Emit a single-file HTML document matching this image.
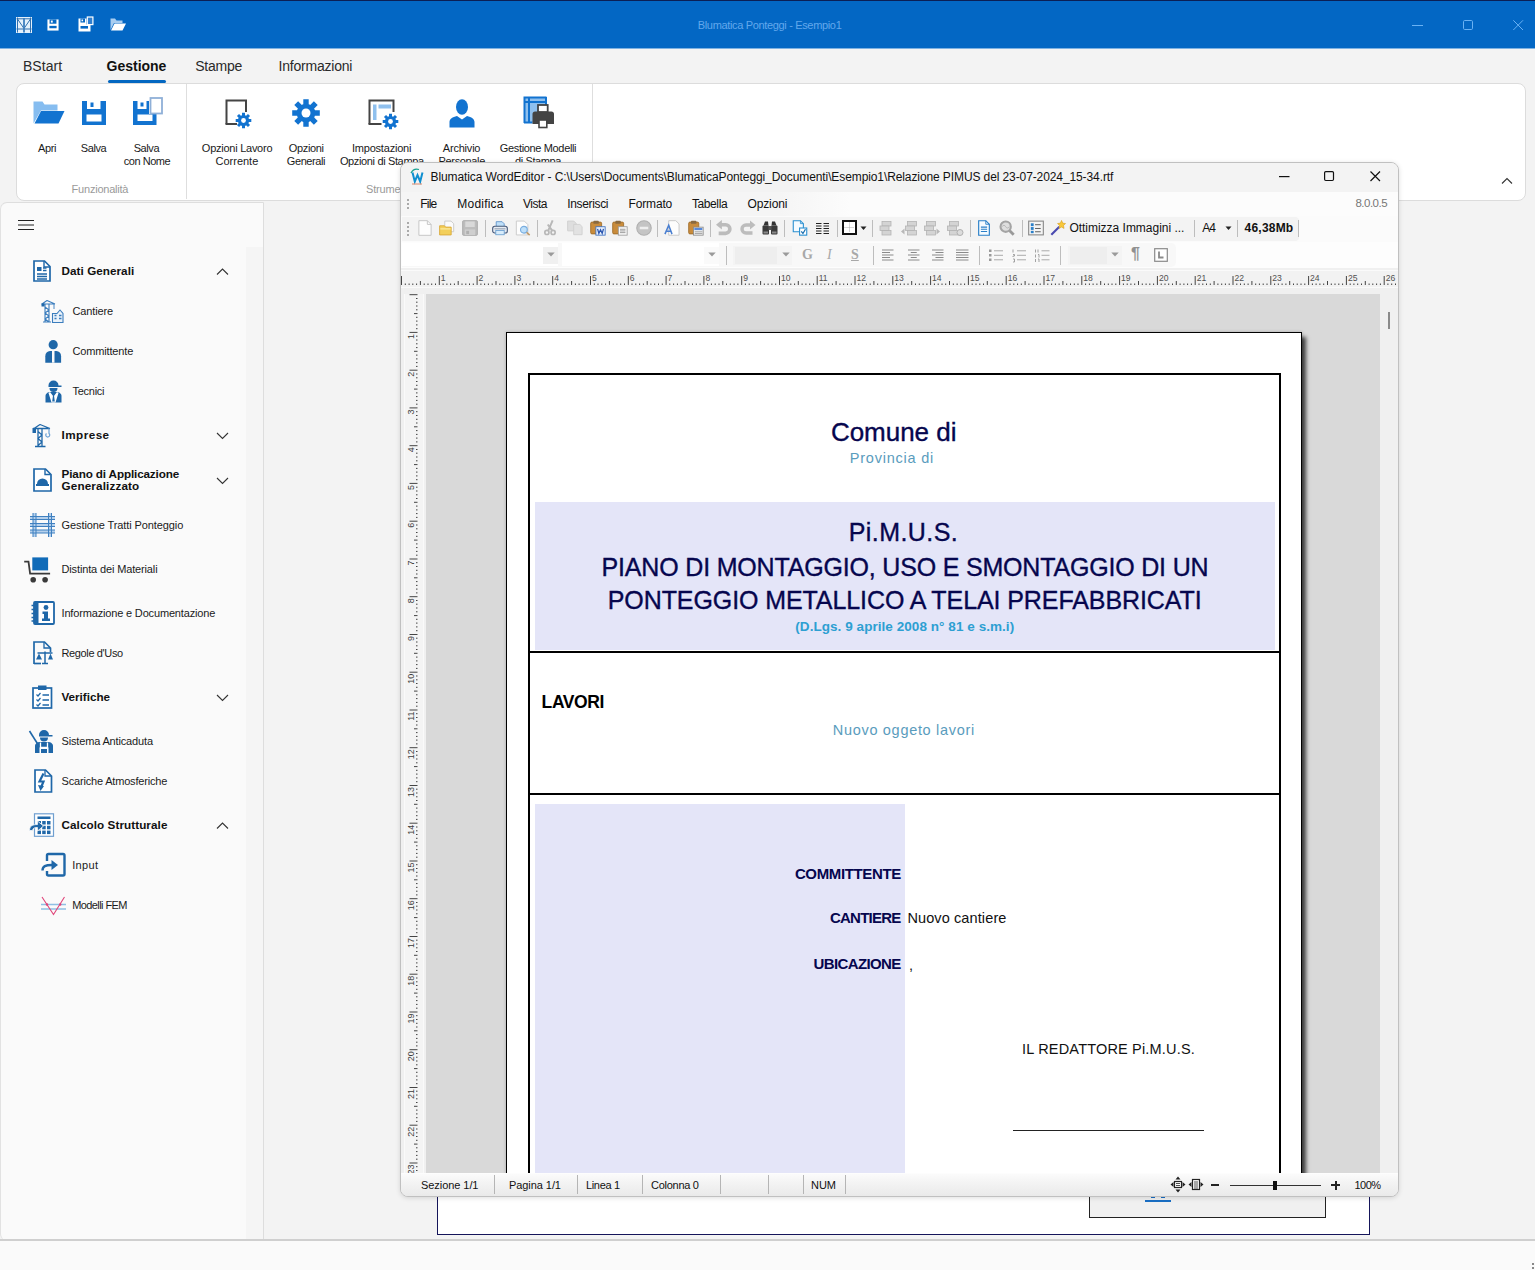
<!DOCTYPE html>
<html lang="it">
<head>
<meta charset="utf-8">
<title>Blumatica Ponteggi - Esempio1</title>
<style>
*{box-sizing:border-box;margin:0;padding:0}
html,body{width:1535px;height:1270px;overflow:hidden;background:#f3f3f3;font-family:"Liberation Sans",sans-serif;font-size:11px;color:#1a1a1a}
.abs{position:absolute}
.tx{position:absolute;white-space:nowrap}
.ic{position:absolute;overflow:visible}
#app{position:absolute;left:0;top:0;width:1535px;height:1270px;overflow:hidden;background:#f3f3f3}
#titlebar{position:absolute;left:0;top:0;width:1535px;height:48px;background:#0367c4;box-shadow:inset 0 1px 0 #0b1f55}
#ribbon{position:absolute;left:16px;top:83px;width:1510px;height:118px;background:#fff;border:1px solid #dcdcdc;border-radius:8px}
#side{position:absolute;left:0px;top:202px;width:264px;height:1038px;background:#fafafa;border-right:1px solid #dddddd;border-top:1px solid #dedede;border-left:1px solid #e2e2e2;border-radius:7px 0 0 6px}
#sidestrip{position:absolute;left:245px;top:44px;width:17px;height:993px;background:#f5f5f5}
#we{position:absolute;left:400px;top:162px;width:998.500px;height:1034.500px;background:#f6f6f6;border:1px solid #c0c0c0;border-radius:8px;overflow:hidden;box-shadow:0 1px 5px rgba(0,0,0,.13)}
#we .sep{position:absolute;width:1px;height:17px;background:#bdbdbd}
#doc{position:absolute;background:#d9d9d9;overflow:hidden}
#page{position:absolute;background:#fff;border:1px solid #000;box-shadow:4px 5px 4px 0 rgba(0,0,0,.7),0 0 3px rgba(0,0,0,.22)}
#d1,#d3,#d4,#d5{-webkit-text-stroke:0.350px currentColor}
.sbs{position:absolute;width:1px;height:19px;background:#b5b5b5}
#apptitle{letter-spacing:-0.338px}
#tab1{letter-spacing:0.059px}
#tab2{letter-spacing:-0.015px}
#tab3{letter-spacing:-0.270px}
#tab4{letter-spacing:-0.215px}
#r1{letter-spacing:-0.354px}
#r2{letter-spacing:-0.433px}
#r3a{letter-spacing:-0.433px}
#r3b{letter-spacing:-0.477px}
#r4a{letter-spacing:-0.254px}
#r4b{letter-spacing:0.000px}
#r5a{letter-spacing:-0.333px}
#r5b{letter-spacing:-0.411px}
#r6a{letter-spacing:-0.197px}
#r6b{letter-spacing:-0.356px}
#r7a{letter-spacing:-0.204px}
#r7b{letter-spacing:-0.356px}
#r8a{letter-spacing:-0.343px}
#r8b{letter-spacing:-0.391px}
#g1{letter-spacing:-0.221px}
#g2{letter-spacing:-0.197px}
#s1{letter-spacing:0.041px}
#s2{letter-spacing:-0.125px}
#s3{letter-spacing:-0.156px}
#s4{letter-spacing:-0.271px}
#s5{letter-spacing:0.445px}
#s6a{letter-spacing:-0.138px}
#s6b{letter-spacing:0.133px}
#s7{letter-spacing:-0.102px}
#s8{letter-spacing:-0.140px}
#s9{letter-spacing:-0.163px}
#s10{letter-spacing:-0.364px}
#s11{letter-spacing:-0.029px}
#s12{letter-spacing:-0.157px}
#s13{letter-spacing:-0.177px}
#s14{letter-spacing:0.074px}
#s15{letter-spacing:0.333px}
#s16{letter-spacing:-0.583px}
#wtitle{letter-spacing:-0.101px}
#m0{letter-spacing:-0.781px}
#m1{letter-spacing:0.216px}
#m2{letter-spacing:-0.492px}
#m3{letter-spacing:-0.352px}
#m4{letter-spacing:-0.148px}
#m5{letter-spacing:-0.389px}
#m6{letter-spacing:-0.098px}
#ver{letter-spacing:-0.495px}
#ott{letter-spacing:-0.017px}
#a4{letter-spacing:-0.987px}
#mb{letter-spacing:0.207px}
#d1{letter-spacing:-0.017px}
#d2{letter-spacing:0.768px}
#d3{letter-spacing:0.440px}
#d4{letter-spacing:-0.181px}
#d5{letter-spacing:-0.087px}
#d6{letter-spacing:0.054px}
#d7{letter-spacing:-0.406px}
#d8{letter-spacing:0.695px}
#d9{letter-spacing:-0.370px}
#d10{letter-spacing:-0.782px}
#d11{letter-spacing:-0.638px}
#d12{letter-spacing:0.113px}
#d14{letter-spacing:0.179px}
#sb1{letter-spacing:-0.061px}
#sb2{letter-spacing:-0.068px}
#sb3{letter-spacing:-0.349px}
#sb4{letter-spacing:-0.270px}
#sb5{letter-spacing:-0.031px}
#sb6{letter-spacing:-0.547px}
</style>
</head>
<body>
<div id="app">

<div id="titlebar">
<svg class="ic" style="left:16px;top:17px" width="16" height="16" viewBox="0 0 16 16"><rect x="0" y="0" width="16" height="16" fill="#e4f1fc"/><path d="M1.500 0.500v15M14.500 0.500v15M0.500 1.800h15M0.500 12h15M1.500 2l6.500 9.500 6.500-9.500" stroke="#2f6fae" stroke-width="1" fill="none"/><path d="M8 1v14.500" stroke="#3d7fbf" stroke-width="1.800"/></svg>
<svg class="ic" style="left:47px;top:19px" width="12" height="12" viewBox="0 0 14 14"><path d="M0.500 0.500h13v13h-13z" fill="#fff"/><rect x="3" y="0.500" width="8" height="5" fill="#0367c4"/><rect x="4.500" y="1.800" width="2.200" height="2.400" fill="#fff"/><rect x="2.800" y="8" width="8.400" height="2.800" fill="#0367c4"/></svg>
<svg class="ic" style="left:78px;top:16px" width="16" height="16" viewBox="0 0 16 16"><path d="M0.500 2.500h8v6h4v7h-12z" fill="#fff"/><rect x="2.500" y="2.500" width="4.500" height="4" fill="#0367c4"/><rect x="3.500" y="3.500" width="1.600" height="1.800" fill="#fff"/><rect x="2.500" y="10" width="7.500" height="2.600" fill="#0367c4"/><rect x="9.300" y="1" width="5.600" height="7.600" fill="#2f7fd0" stroke="#fff" stroke-width="1.200"/></svg>
<svg class="ic" style="left:110px;top:18px" width="16" height="13" viewBox="0 0 16 13"><path d="M0.500 0.500h4.500l1.500 2h6v2.500h-8.500l-3.500 7z" fill="#a9cdf0"/><path d="M4.500 5.500h11.500l-3.500 7h-11.500z" fill="#fff"/></svg>
<div class="tx" id="apptitle" style="left:769.6px;transform:translateX(-50%);top:18.0px;font-size:11px;line-height:14px;color:#62a8ec;">Blumatica Ponteggi - Esempio1</div>
<svg class="ic" style="left:1412px;top:25px" width="12" height="2" viewBox="0 0 12 2"><rect width="11" height="1" fill="#6ab2f4"/></svg>
<svg class="ic" style="left:1463px;top:20px" width="12" height="12" viewBox="0 0 12 12"><rect x="0.500" y="0.500" width="9" height="9" rx="1.200" fill="none" stroke="#6ab2f4" stroke-width="1"/></svg>
<svg class="ic" style="left:1513px;top:20px" width="12" height="12" viewBox="0 0 12 12"><path d="M0.300 0.300L10 10M10 0.300L0.300 10" stroke="#6ab2f4" stroke-width="1" fill="none"/></svg>
</div>
<div class="abs" style="left:0px;top:48px;width:1535px;height:1px;background:#7fb2e2"></div>
<div class="tx" id="tab1" style="left:22.9px;top:57.25px;font-size:14px;line-height:18px;color:#2a2a2a;">BStart</div>
<div class="tx" id="tab2" style="left:106.6px;top:57.25px;font-size:14px;line-height:18px;color:#111;font-weight:bold;">Gestione</div>
<div class="abs" style="left:108px;top:79.8px;width:58px;height:3px;background:#0367c1;border-radius:2px"></div>
<div class="tx" id="tab3" style="left:195.3px;top:57.25px;font-size:14px;line-height:18px;color:#2a2a2a;">Stampe</div>
<div class="tx" id="tab4" style="left:278.5px;top:57.25px;font-size:14px;line-height:18px;color:#2a2a2a;">Informazioni</div>
<div id="ribbon">
<div class="abs" style="left:169px;top:0px;width:1px;height:115px;background:#dedede"></div>
<div class="abs" style="left:575px;top:0px;width:1px;height:115px;background:#dedede"></div>
<svg class="ic" style="left:16px;top:17px" width="32" height="23" viewBox="0 0 32 23"><path d="M0.500 0.500h9l2 3h13v6h-16.500l-7.500 13z" fill="#86bdf0"/><path d="M8 10h23.500l-6 12.500h-24z" fill="#1273d0"/></svg>
<svg class="ic" style="left:65px;top:17px" width="24" height="24" viewBox="0 0 24 24"><path d="M0 0h24v24h-24z" fill="#1273d0"/><rect x="5" y="0" width="13.500" height="8" fill="#fff"/><rect x="8.500" y="1.500" width="3" height="4.500" fill="#1273d0"/><rect x="4.500" y="13.500" width="15" height="7" fill="#fff"/></svg>
<svg class="ic" style="left:116px;top:13px" width="30" height="28" viewBox="0 0 30 28"><path d="M0 4h16v13h7.500v11h-23.500z" fill="#1273d0"/><rect x="4.500" y="4" width="9" height="8" fill="#fff"/><rect x="7.500" y="5.500" width="3" height="4" fill="#1273d0"/><rect x="4.500" y="17.500" width="15" height="6.500" fill="#fff"/><rect x="17.500" y="1" width="11.500" height="15.500" fill="#fff" stroke="#8fb0d8" stroke-width="1.800"/></svg>
<svg class="ic" style="left:208px;top:15px" width="30" height="33" viewBox="0 0 30 33"><path d="M1.500 25v-23.500h19.500v11.500" fill="none" stroke="#444" stroke-width="2"/><path d="M0.500 25h11.500" stroke="#444" stroke-width="2"/><g transform="translate(18.5,21.5)"><circle r="5.600" fill="#1273d0"/><g stroke="#1273d0" stroke-width="3"><path d="M0-7.800V7.800M-7.800 0H7.800M-5.500-5.500L5.500 5.500M-5.500 5.500L5.500-5.500"/></g><circle r="2.400" fill="#fff"/></g></svg>
<svg class="ic" style="left:274px;top:14px" width="30" height="30" viewBox="-15 -15 30 30"><circle r="9.300" fill="#1273d0"/><g stroke="#1273d0" stroke-width="5.400"><path d="M0-13.800V13.800M-13.800 0H13.800M-9.800-9.800L9.800 9.800M-9.800 9.800L9.800-9.800"/></g><circle r="4.500" fill="#fff"/></svg>
<svg class="ic" style="left:350.5px;top:14.5px" width="32" height="33" viewBox="0 0 32 33"><path d="M1.500 25v-23.500h24v11.500" fill="none" stroke="#444" stroke-width="2"/><path d="M0.500 25h13" stroke="#444" stroke-width="2"/><rect x="5" y="5.500" width="3.500" height="15.500" fill="#8fc0ee"/><rect x="10.500" y="5.500" width="12.500" height="4" fill="#8fc0ee"/><g transform="translate(22.5,22.5)"><circle r="5.600" fill="#1273d0"/><g stroke="#1273d0" stroke-width="3"><path d="M0-7.800V7.800M-7.800 0H7.800M-5.500-5.500L5.500 5.500M-5.500 5.500L5.500-5.500"/></g><circle r="2.400" fill="#fff"/></g></svg>
<svg class="ic" style="left:432px;top:14.5px" width="26" height="29" viewBox="0 0 26 29"><ellipse cx="13" cy="8" rx="6" ry="7.800" fill="#1273d0"/><path d="M0.500 28.500v-5.500c0-3 3-5 7.500-6l5 3.500 5-3.500c4.500 1 7.500 3 7.500 6v5.500z" fill="#1273d0"/></svg>
<svg class="ic" style="left:506px;top:12px" width="32" height="34" viewBox="0 0 32 34"><rect x="1.500" y="1.500" width="21" height="25" fill="#8fc0ee"/><path d="M0.500 1.500h23M1.500 0.500v26.500M6 1v26M1 6h22.500M1 26.500h8.500M23 1v8" stroke="#1273d0" stroke-width="2" fill="none"/><path d="M9.500 18c0-1.500 1-2.500 2.500-2.500h16.500c1.500 0 2.500 1 2.500 2.500v10h-21.500z" fill="#444"/><rect x="15" y="9" width="9.700" height="7" fill="#fff" stroke="#444" stroke-width="1.800"/><rect x="16" y="24" width="7.800" height="7.500" fill="#fff" stroke="#444" stroke-width="1.600"/></svg>
<div class="tx" id="r1" style="left:30.05px;transform:translateX(-50%);top:57.2px;font-size:11px;line-height:14px;color:#1a1a1a;">Apri</div>
<div class="tx" id="r2" style="left:76.5px;transform:translateX(-50%);top:57.2px;font-size:11px;line-height:14px;color:#1a1a1a;">Salva</div>
<div class="tx" id="r3a" style="left:129.4px;transform:translateX(-50%);top:57.2px;font-size:11px;line-height:14px;color:#1a1a1a;">Salva</div>
<div class="tx" id="r3b" style="left:130.0px;transform:translateX(-50%);top:70.2px;font-size:11px;line-height:14px;color:#1a1a1a;">con Nome</div>
<div class="tx" id="r4a" style="left:220.05px;transform:translateX(-50%);top:57.2px;font-size:11px;line-height:14px;color:#1a1a1a;">Opzioni Lavoro</div>
<div class="tx" id="r4b" style="left:219.9px;transform:translateX(-50%);top:70.2px;font-size:11px;line-height:14px;color:#1a1a1a;">Corrente</div>
<div class="tx" id="r5a" style="left:289.25px;transform:translateX(-50%);top:57.2px;font-size:11px;line-height:14px;color:#1a1a1a;">Opzioni</div>
<div class="tx" id="r5b" style="left:288.95px;transform:translateX(-50%);top:70.2px;font-size:11px;line-height:14px;color:#1a1a1a;">Generali</div>
<div class="tx" id="r6a" style="left:364.6px;transform:translateX(-50%);top:57.2px;font-size:11px;line-height:14px;color:#1a1a1a;">Impostazioni</div>
<div class="tx" id="r6b" style="left:364.8px;transform:translateX(-50%);top:70.2px;font-size:11px;line-height:14px;color:#1a1a1a;">Opzioni di Stampa</div>
<div class="tx" id="r7a" style="left:444.55px;transform:translateX(-50%);top:57.2px;font-size:11px;line-height:14px;color:#1a1a1a;">Archivio</div>
<div class="tx" id="r7b" style="left:444.75px;transform:translateX(-50%);top:70.2px;font-size:11px;line-height:14px;color:#1a1a1a;">Personale</div>
<div class="tx" id="r8a" style="left:521.0px;transform:translateX(-50%);top:57.2px;font-size:11px;line-height:14px;color:#1a1a1a;">Gestione Modelli</div>
<div class="tx" id="r8b" style="left:521.0px;transform:translateX(-50%);top:70.2px;font-size:11px;line-height:14px;color:#1a1a1a;">di Stampa</div>
<div class="tx" id="g1" style="left:82.95px;transform:translateX(-50%);top:98.3px;font-size:11px;line-height:14px;color:#9a9a9a;">Funzionalità</div>
<div class="tx" id="g2" style="left:371.75px;transform:translateX(-50%);top:98.3px;font-size:11px;line-height:14px;color:#9a9a9a;">Strumenti</div>
<svg class="ic" style="left:1484px;top:93px" width="12" height="8" viewBox="0 0 12 8"><path d="M1 6.500L6 1.500L11 6.500" fill="none" stroke="#333" stroke-width="1.100"/></svg>
</div>
<div id="side">
<div id="sidestrip"></div>
<svg class="ic" style="left:17px;top:16px" width="17" height="12" viewBox="0 0 17 12"><path d="M0 1.500h16M0 6h16M0 10.500h16" stroke="#222" stroke-width="1"/></svg>
<svg class="ic" style="left:31.5px;top:57px" width="18" height="22" viewBox="0 0 18 22"><path d="M1 1h10.500l5.500 5.500v14.500h-16z" fill="#fff" stroke="#1f67a8" stroke-width="1.700"/><path d="M11 1v6h6" fill="none" stroke="#1f67a8" stroke-width="1.400"/><rect x="4" y="7" width="4.500" height="4" fill="#1f67a8"/><path d="M10 8h3.500M10 10.500h3.500M4 14h10M4 16.500h10M4 19h10" stroke="#1f67a8" stroke-width="1.300"/></svg>
<div class="tx" id="s1" style="left:60.6px;top:59.71px;font-size:11.7px;line-height:15px;color:#111;font-weight:bold;">Dati Generali</div>
<svg class="ic" style="left:215px;top:64.5px" width="13" height="8" viewBox="0 0 13 8"><path d="M1 6.500L6.500 1L12 6.500" fill="none" stroke="#333" stroke-width="1.100"/></svg>
<svg class="ic" style="left:40px;top:97px" width="23" height="23" viewBox="0 0 23 23"><path d="M0.500 4h13M6 0.500l-5 3.500M6 0.500l8 3.500M4 4v18M8 4v18M4 7l4 3-4 3 4 3-4 3 4 3M2 22h8" stroke="#3b7dbd" stroke-width="1.100" fill="none"/><rect x="0.500" y="3.500" width="3" height="3" fill="#1f67a8"/><path d="M13 4v5" stroke="#3b7dbd" stroke-width="0.900"/><path d="M11.500 22.500v-9h4.500l3-3.500 3 3.500v9z" fill="#eaf2fa" stroke="#3b7dbd" stroke-width="1.100"/><path d="M13.500 15.500h2M13.500 18.500h2M18 15.500h2.500M18 18.500h2.500" stroke="#3b7dbd" stroke-width="1.400"/></svg>
<div class="tx" id="s2" style="left:71.5px;top:101.4px;font-size:11px;line-height:14px;color:#1a1a1a;">Cantiere</div>
<svg class="ic" style="left:43.5px;top:137px" width="17" height="23" viewBox="0 0 17 23"><circle cx="8.200" cy="4.700" r="4.600" fill="#1f67a8"/><path d="M0.300 22.700v-6.500c0-3.200 2-5 4.700-5.200h6.400c2.700 0.200 4.700 2 4.700 5.200v6.500z" fill="#1f67a8"/><rect x="7" y="11" width="2.500" height="11.700" fill="#fafafa"/></svg>
<div class="tx" id="s3" style="left:71.5px;top:141.4px;font-size:11px;line-height:14px;color:#1a1a1a;">Committente</div>
<svg class="ic" style="left:43.5px;top:175.8px" width="17" height="24" viewBox="0 0 17 24"><path d="M3.500 6.500a5 5 0 0 1 10 0h3v1.600h-13z" fill="#1f67a8"/><path d="M4.500 9h8a4 4 0 0 1-8 0z" fill="#1f67a8"/><path d="M0.500 23.500v-6.500c0-2.500 2.500-4 5-4h6c2.500 0 5 1.500 5 4v6.500z" fill="#1f67a8"/><path d="M5 13l3.500 4.500 3.500-4.500 1.500 1-3 9.500h-4l-3-9.500z" fill="#fff"/><path d="M7.500 15h2l-0.500 1.500 0.800 6h-2.600l0.800-6z" fill="#1f67a8"/></svg>
<div class="tx" id="s4" style="left:71.5px;top:181.2px;font-size:11px;line-height:14px;color:#1a1a1a;">Tecnici</div>
<svg class="ic" style="left:31px;top:221px" width="20" height="23" viewBox="0 0 20 23"><path d="M1 4.500h17M8 0.500l-6 4M8 0.500l10 4M6 4.500v18M10 4.500v18M6 7.500l4 3.500-4 3.500 4 3.500-4 3.500M3 22.500h10.500" stroke="#1f67a8" stroke-width="1.300" fill="none"/><rect x="0.500" y="4" width="3.500" height="5" fill="#1f67a8"/><path d="M17 4.500v5a2 2 0 1 1-2.500 0" stroke="#6ea3d6" stroke-width="1.200" fill="none"/></svg>
<div class="tx" id="s5" style="left:60.6px;top:223.61px;font-size:11.7px;line-height:15px;color:#111;font-weight:bold;">Imprese</div>
<svg class="ic" style="left:215px;top:229.0px" width="13" height="8" viewBox="0 0 13 8"><path d="M1 1L6.500 6.500L12 1" fill="none" stroke="#333" stroke-width="1.100"/></svg>
<svg class="ic" style="left:31.5px;top:265px" width="19" height="24" viewBox="0 0 19 24"><path d="M1 1h11.500l5.500 5.500v16.500h-17z" fill="#fff" stroke="#1f67a8" stroke-width="1.700"/><path d="M12 1v5.500h5.500" fill="none" stroke="#1f67a8" stroke-width="1.400"/><path d="M4 16a5.500 5.500 0 0 1 11 0h1v2h-13v-2z" fill="#1f67a8"/></svg>
<div class="tx" id="s6a" style="left:60.6px;top:262.51px;font-size:11.7px;line-height:15px;color:#111;font-weight:bold;">Piano di Applicazione</div>
<div class="tx" id="s6b" style="left:60.6px;top:275.41px;font-size:11.7px;line-height:15px;color:#111;font-weight:bold;">Generalizzato</div>
<svg class="ic" style="left:215px;top:274.0px" width="13" height="8" viewBox="0 0 13 8"><path d="M1 1L6.500 6.500L12 1" fill="none" stroke="#333" stroke-width="1.100"/></svg>
<svg class="ic" style="left:29px;top:310px" width="25" height="24" viewBox="0 0 25 24"><g fill="#b5d0ec"><rect x="0" y="3.500" width="25" height="3"/><rect x="0" y="10.500" width="25" height="3"/><rect x="0" y="17" width="25" height="3"/><rect x="3" y="0" width="3" height="24"/><rect x="18.500" y="0" width="3" height="24"/></g><g stroke="#3f80c0" stroke-width="1"><path d="M0 3.500h25M0 6.500h25M0 10.500h25M0 13.500h25M0 17h25M0 20h25M3 0v24M6 0v24M18.500 0v24M21.500 0v24"/></g></svg>
<div class="tx" id="s7" style="left:60.6px;top:315.4px;font-size:11px;line-height:14px;color:#1a1a1a;">Gestione Tratti Ponteggio</div>
<svg class="ic" style="left:23px;top:354px" width="27" height="27" viewBox="0 0 27 27"><rect x="8.300" y="0.400" width="15.800" height="13" fill="#106bb8"/><path d="M0.200 4.600h4.300l1.600 12h20" fill="none" stroke="#3a3a3a" stroke-width="1.800"/><circle cx="9.200" cy="22.800" r="2.800" fill="#3a3a3a"/><circle cx="21.100" cy="22.800" r="2.800" fill="#3a3a3a"/></svg>
<div class="tx" id="s8" style="left:60.5px;top:359.4px;font-size:11px;line-height:14px;color:#1a1a1a;">Distinta dei Materiali</div>
<svg class="ic" style="left:29.5px;top:397.5px" width="24" height="24" viewBox="0 0 24 24"><rect x="3" y="1" width="20" height="22" rx="1" fill="#fff" stroke="#1f67a8" stroke-width="1.800"/><path d="M0.500 4.500h5M0.500 8.500h5M0.500 12.500h5M0.500 16.500h5M0.500 20h5" stroke="#1f67a8" stroke-width="1.600"/><rect x="3" y="1" width="4.500" height="22" fill="#1f67a8"/><circle cx="15" cy="6.500" r="2.400" fill="#1f67a8"/><path d="M11.500 10.500h5.500v7h2v2.500h-8v-2.500h2v-4.500h-1.500z" fill="#1f67a8"/></svg>
<div class="tx" id="s9" style="left:60.5px;top:403.3px;font-size:11px;line-height:14px;color:#1a1a1a;">Informazione e Documentazione</div>
<svg class="ic" style="left:32px;top:438px" width="20" height="24" viewBox="0 0 20 24"><path d="M1 23v-22h10.500l6 6v4" fill="none" stroke="#1f67a8" stroke-width="1.700"/><path d="M11 1v6h6" fill="none" stroke="#1f67a8" stroke-width="1.300"/><path d="M1 22.500h7" stroke="#1f67a8" stroke-width="1.700"/><path d="M4.500 12h15M12 10.500v12M9 22.500h6" stroke="#1f67a8" stroke-width="1.500" fill="none"/><path d="M3 18.500l3-6 3 6zM15 18.500l2.500-6 2.500 6z" fill="#1f67a8"/></svg>
<div class="tx" id="s10" style="left:60.5px;top:443.2px;font-size:11px;line-height:14px;color:#1a1a1a;">Regole d'Uso</div>
<svg class="ic" style="left:31px;top:482px" width="21" height="24" viewBox="0 0 21 24"><rect x="1" y="3" width="18.500" height="20" fill="#fff" stroke="#1f67a8" stroke-width="1.700"/><rect x="6" y="0.500" width="8.500" height="4.500" fill="#1f67a8"/><path d="M4.500 9.500l1.500 1.500 2.500-3M4.500 14.500l1.500 1.500 2.500-3M4.500 19.500l1.500 1.500 2.500-3" fill="none" stroke="#1f67a8" stroke-width="1.200"/><path d="M10.500 10h6.500M10.500 15h6.500M10.500 20h6.500" stroke="#1f67a8" stroke-width="1.400"/></svg>
<div class="tx" id="s11" style="left:60.5px;top:485.71px;font-size:11.7px;line-height:15px;color:#111;font-weight:bold;">Verifiche</div>
<svg class="ic" style="left:215px;top:490.5px" width="13" height="8" viewBox="0 0 13 8"><path d="M1 1L6.500 6.500L12 1" fill="none" stroke="#333" stroke-width="1.100"/></svg>
<svg class="ic" style="left:27.8px;top:526.5px" width="25" height="23" viewBox="0 0 25 23"><path d="M0.500 1l8.500 13.500" stroke="#1f67a8" stroke-width="1.600"/><path d="M10 5a5 5 0 0 1 10 0h3.500v1.600h-13.500z" fill="#1f67a8"/><path d="M11 7.500h8a4 4 0 0 1-8 0z" fill="#1f67a8"/><path d="M6 23v-7c0-2.500 2.500-4 5-4h8c2.500 0 5 1.500 5 4v7z" fill="#1f67a8"/><path d="M11.500 12.500v5h7v-5" fill="none" stroke="#fff" stroke-width="1.300"/><rect x="10.500" y="17.500" width="9" height="5.500" fill="#fff"/><rect x="12" y="19" width="6" height="4" fill="#1f67a8"/></svg>
<div class="tx" id="s12" style="left:60.5px;top:531.4px;font-size:11px;line-height:14px;color:#1a1a1a;">Sistema Anticaduta</div>
<svg class="ic" style="left:32.5px;top:565.5px" width="19" height="24" viewBox="0 0 19 24"><path d="M1 1h10.500l6 6v16h-16.500z" fill="#fff" stroke="#1f67a8" stroke-width="1.700"/><path d="M11 1v6h6" fill="none" stroke="#1f67a8" stroke-width="1.300"/><path d="M9.500 4.500l-4 8h4l-2.500 6" fill="none" stroke="#1f67a8" stroke-width="2.200"/><path d="M4 16l2.500 6 3.500-5z" fill="#1f67a8"/></svg>
<div class="tx" id="s13" style="left:60.5px;top:571.3px;font-size:11px;line-height:14px;color:#1a1a1a;">Scariche Atmosferiche</div>
<svg class="ic" style="left:27.5px;top:609.5px" width="25" height="24" viewBox="0 0 25 24"><rect x="5.500" y="0.800" width="19" height="22.500" fill="#fff" stroke="#6f9fd0" stroke-width="1.200"/><rect x="8.500" y="3.500" width="13" height="2.500" fill="#1f67a8"/><g fill="#1f67a8"><rect x="8.500" y="8" width="3.500" height="3.500"/><rect x="13.200" y="8" width="3.500" height="3.500"/><rect x="18" y="8" width="3.500" height="3.500"/><rect x="8.500" y="12.800" width="3.500" height="3.500"/><rect x="13.200" y="12.800" width="3.500" height="3.500"/><rect x="18" y="12.800" width="3.500" height="3.500"/><rect x="8.500" y="17.600" width="3.500" height="3.500"/><rect x="13.200" y="17.600" width="3.500" height="3.500"/><rect x="18" y="17.600" width="3.500" height="3.500"/></g><path d="M0.500 17.500c0-4.500 3-6 8-6v-3.500l6 5-6 5v-3.500c-3 0-4.500 0.500-5 3z" fill="#1f67a8" stroke="#fafafa" stroke-width="0.800"/></svg>
<div class="tx" id="s14" style="left:60.5px;top:613.71px;font-size:11.7px;line-height:15px;color:#111;font-weight:bold;">Calcolo Strutturale</div>
<svg class="ic" style="left:215px;top:618.5px" width="13" height="8" viewBox="0 0 13 8"><path d="M1 6.500L6.500 1L12 6.500" fill="none" stroke="#333" stroke-width="1.100"/></svg>
<svg class="ic" style="left:40px;top:650px" width="25" height="24" viewBox="0 0 25 24"><path d="M6 8v-5.500a1.500 1.500 0 0 1 1.500-1.500h14.500a1.500 1.500 0 0 1 1.500 1.500v18.500a1.500 1.500 0 0 1-1.500 1.500h-14.500a1.500 1.500 0 0 1-1.500-1.500v-3" fill="none" stroke="#1f67a8" stroke-width="2.400"/><path d="M1.500 17.500c0-4.500 3-5.500 9.500-5.500" fill="none" stroke="#1f67a8" stroke-width="2.400"/><path d="M10.500 7l6.500 5-6.500 5z" fill="#1f67a8"/></svg>
<div class="tx" id="s15" style="left:71.2px;top:655.2px;font-size:11px;line-height:14px;color:#1a1a1a;">Input</div>
<svg class="ic" style="left:40px;top:693px" width="25" height="21" viewBox="0 0 25 21"><path d="M0 8.500h25M0 13h25" stroke="#8fc0e4" stroke-width="1.400"/><path d="M1 1l11.500 17.500 11-17.500" fill="none" stroke="#e0457a" stroke-width="1.100"/><circle cx="6" cy="8.500" r="1.200" fill="#e0457a"/><circle cx="19.200" cy="8.500" r="1.200" fill="#e0457a"/></svg>
<div class="tx" id="s16" style="left:71.2px;top:694.8px;font-size:11px;line-height:14px;color:#1a1a1a;">Modelli FEM</div>
</div>
<div class="abs" style="left:0px;top:1239px;width:1535px;height:31px;background:#fafafa;border-top:2px solid #cfcfcf"></div>
<div class="abs" style="left:1532px;top:1263px;width:2px;height:2px;background:#888"></div>
<div class="abs" style="left:1532px;top:1267px;width:2px;height:2px;background:#888"></div>
<div class="abs" style="left:437px;top:1000px;width:933px;height:235px;background:#fff;border:1px solid #15155a"></div>
<div class="abs" style="left:1089px;top:1100px;width:237px;height:118px;background:#f0f0f0;border:1px solid #222"></div>
<div class="abs" style="left:1145px;top:1199.5px;width:26px;height:2px;background:#1a6fc4"></div>
<div class="abs" style="left:1151px;top:1196px;width:4px;height:2px;background:#1a6fc4"></div>
<div class="abs" style="left:1161px;top:1196px;width:4px;height:2px;background:#1a6fc4"></div>
<div id="we">
<div class="abs" style="left:0px;top:0px;width:999px;height:29px;background:#f3f3f3"></div>
<svg class="ic" style="left:8.5px;top:4.5px" width="15" height="17" viewBox="0 0 15 17"><path d="M2.500 4.500l2.300 9 2.700-6.500 2.700 6.500 2.300-9" fill="none" stroke="#0f8fd0" stroke-width="2"/><path d="M1 5c1.500-3 4.500-4.500 8-3.500" fill="none" stroke="#17a090" stroke-width="1.300"/><path d="M2 16h10" stroke="#d9876a" stroke-width="1"/></svg>
<div class="tx" id="wtitle" style="left:29.5px;top:7.42px;font-size:12px;line-height:15px;color:#111;">Blumatica WordEditor - C:\Users\Documents\BlumaticaPonteggi_Documenti\Esempio1\Relazione PIMUS del 23-07-2024_15-34.rtf</div>
<svg class="ic" style="left:878px;top:12.5px" width="12" height="2" viewBox="0 0 12 2"><rect width="10.500" height="1.200" fill="#111"/></svg>
<svg class="ic" style="left:923px;top:8px" width="12" height="12" viewBox="0 0 12 12"><rect x="0.600" y="0.600" width="8.900" height="8.900" rx="1.200" fill="none" stroke="#111" stroke-width="1.200"/></svg>
<svg class="ic" style="left:968.5px;top:8px" width="12" height="12" viewBox="0 0 12 12"><path d="M0.500 0.500L10 10M10 0.500L0.500 10" stroke="#111" stroke-width="1.200" fill="none"/></svg>
<div class="abs" style="left:0px;top:29px;width:999px;height:24px;background:linear-gradient(90deg,#f5f5f5,#f5f5f5 38%,#fcfcfc 45%)"></div>
<div class="abs" style="left:6px;top:36px;width:2px;height:2px;background:#aaa;box-shadow:0 4px #aaa,0 8px #aaa"></div>
<div class="tx" id="m0" style="left:19.3px;top:33.82px;font-size:12px;line-height:15px;color:#111;">File</div>
<div class="tx" id="m1" style="left:56.3px;top:33.82px;font-size:12px;line-height:15px;color:#111;">Modifica</div>
<div class="tx" id="m2" style="left:122px;top:33.82px;font-size:12px;line-height:15px;color:#111;">Vista</div>
<div class="tx" id="m3" style="left:166.3px;top:33.82px;font-size:12px;line-height:15px;color:#111;">Inserisci</div>
<div class="tx" id="m4" style="left:227.5px;top:33.82px;font-size:12px;line-height:15px;color:#111;">Formato</div>
<div class="tx" id="m5" style="left:290.9px;top:33.82px;font-size:12px;line-height:15px;color:#111;">Tabella</div>
<div class="tx" id="m6" style="left:346.4px;top:33.82px;font-size:12px;line-height:15px;color:#111;">Opzioni</div>
<div class="tx" id="ver" style="left:954.4px;top:33.01px;font-size:11.5px;line-height:14px;color:#777;">8.0.0.5</div>
<div class="abs" style="left:0px;top:53px;width:999px;height:26px;background:#fbfbfb"></div>
<div class="abs" style="left:1px;top:54px;width:897px;height:24px;background:#f3f3f3;border-radius:0 4px 4px 0"></div>
<div class="abs" style="left:6px;top:59px;width:2px;height:2px;background:#aaa;box-shadow:0 4px #aaa,0 8px #aaa,0 12px #aaa"></div>
<svg class="ic" style="left:16px;top:57px" width="16" height="16" viewBox="0 0 16 17"><path d="M1.500 0.700h9l4 4v11.600h-13z" fill="#fdfdfd" stroke="#c4c4c4" stroke-width="1"/><path d="M10.500 0.700v4h4" fill="none" stroke="#c4c4c4"/></svg>
<svg class="ic" style="left:38px;top:57px" width="16" height="16" viewBox="0 0 18 17"><path d="M6.500 0.700h7l3 3v9h-10z" fill="#fbfbfb" stroke="#c8c8c8"/><path d="M0.700 6h5.500l1.200 1.500h6.300v8.800h-13z" fill="#f3cf5a" stroke="#d9a93a"/><path d="M1.500 9.500h11.500" stroke="#fae9a0" stroke-width="1.500"/></svg>
<svg class="ic" style="left:61px;top:57px" width="16" height="16" viewBox="0 0 17 17"><rect x="0.700" y="0.700" width="15.600" height="15.600" rx="1" fill="#bdbdbd" stroke="#a9a9a9"/><rect x="3.500" y="1.500" width="10" height="6" fill="#d9d9d9"/><rect x="3" y="10" width="11" height="6" fill="#cfcfcf"/><rect x="4.500" y="11.500" width="3" height="3.500" fill="#b0b0b0"/></svg>
<div class="sep" style="left:84px;top:57px;height:17px"></div>
<svg class="ic" style="left:91px;top:57px" width="16" height="16" viewBox="0 0 19 18"><path d="M5 7v-5.500h7l2.500 2.500v3" fill="#bfe0fa" stroke="#5a8fc8"/><rect x="0.800" y="7" width="17.400" height="8" rx="2.500" fill="#e6ebf2" stroke="#46597a" stroke-width="1.300"/><rect x="4.500" y="12" width="10" height="5" fill="#d8ecfb" stroke="#6a9fd0"/><path d="M3 10h13" stroke="#7a8aa0"/></svg>
<svg class="ic" style="left:114px;top:57px" width="16" height="16" viewBox="0 0 18 17"><path d="M1.500 0.700h9l4 4v11.600h-13z" fill="#fdfdfd" stroke="#c8c8c8"/><circle cx="10" cy="10.500" r="3.800" fill="#bfe0fa" stroke="#7aaee0" stroke-width="1.300"/><path d="M13 13.500l3.500 3" stroke="#c09a6a" stroke-width="1.800"/></svg>
<div class="sep" style="left:136px;top:57px;height:17px"></div>
<svg class="ic" style="left:141px;top:57px" width="16" height="16" viewBox="0 0 14 18"><path d="M10 0.500l-5 11.500M4.500 5l5 7" stroke="#b8b8b8" stroke-width="2.200" fill="none"/><circle cx="3.500" cy="14" r="2.300" fill="none" stroke="#b8b8b8" stroke-width="1.900"/><circle cx="10.500" cy="14" r="2.300" fill="none" stroke="#b8b8b8" stroke-width="1.900"/></svg>
<svg class="ic" style="left:166px;top:57px" width="16" height="16" viewBox="0 0 18 17"><path d="M0.700 0.700h7l2.500 2.500v8.500h-9.500z" fill="#dedede" stroke="#d0d0d0"/><path d="M7.500 4.500h7l2.500 2.500v9h-9.500z" fill="#e2e2e2" stroke="#d0d0d0"/></svg>
<svg class="ic" style="left:189px;top:57px" width="16" height="16" viewBox="0 0 19 18"><rect x="0.800" y="2" width="13" height="14" rx="1.500" fill="#c98c3c" stroke="#9c6a28"/><rect x="4" y="0.500" width="6.500" height="3.500" rx="1" fill="#8a6a40"/><rect x="7" y="7.500" width="11" height="10" fill="#e8f0fc" stroke="#3a6fc0"/><path d="M9 10l1.500 5.500 2-4.500 2 4.500 1.500-5.500" fill="none" stroke="#2a55b0" stroke-width="1.500"/></svg>
<svg class="ic" style="left:211px;top:57px" width="16" height="16" viewBox="0 0 19 18"><rect x="0.800" y="2" width="13" height="14" rx="1.500" fill="#c98c3c" stroke="#9c6a28"/><rect x="4" y="0.500" width="6.500" height="3.500" rx="1" fill="#8a6a40"/><rect x="7.500" y="7.500" width="10.500" height="10" fill="#fafafa" stroke="#9a9a9a"/><path d="M9.500 10.500h6.500M9.500 12.500h6.500M9.500 14.500h6.500" stroke="#8a8a8a"/></svg>
<svg class="ic" style="left:235px;top:57px" width="16" height="16" viewBox="0 0 15 15"><circle cx="7.500" cy="7.500" r="6.800" fill="#c4c4c4" stroke="#b0b0b0"/><rect x="3.500" y="6.300" width="8" height="2.400" fill="#eee"/></svg>
<div class="sep" style="left:256px;top:57px;height:17px"></div>
<svg class="ic" style="left:263px;top:57px" width="16" height="16" viewBox="0 0 17 17"><path d="M5 0.700h7.500l3.500 3.500v12h-11z" fill="#fdfdfd" stroke="#c8c8c8"/><path d="M1 15l4-9.500 3.500 9.500M2.500 12h5" fill="none" stroke="#4a7fd0" stroke-width="1.600"/></svg>
<svg class="ic" style="left:287px;top:57px" width="16" height="16" viewBox="0 0 19 18"><rect x="0.800" y="2" width="12" height="14" rx="1.500" fill="#c98c3c" stroke="#9c6a28"/><rect x="3.500" y="0.500" width="6.500" height="3.500" rx="1" fill="#8a6a40"/><rect x="6.500" y="8" width="11.500" height="9.500" fill="#f2f2f2" stroke="#8a8a8a"/><rect x="7.500" y="9" width="9.500" height="2.500" fill="#5a8ad8"/><path d="M8 13.500h9M8 15.500h9" stroke="#9a9a9a"/></svg>
<div class="sep" style="left:309px;top:57px;height:17px"></div>
<svg class="ic" style="left:315px;top:57px" width="16" height="16" viewBox="0 0 15 15"><path d="M4 4.500h5a4 4 0 0 1 0 8h-6.500" fill="none" stroke="#bcbcbc" stroke-width="3.400"/><path d="M0 4.500l5.500-4.500v9z" fill="#bcbcbc"/></svg>
<svg class="ic" style="left:339px;top:57px" width="16" height="16" viewBox="0 0 16 15"><path d="M11 4.500h-5a4 4 0 0 0 0 8h6.500" fill="none" stroke="#bcbcbc" stroke-width="3.400"/><path d="M15.500 4.500l-5.500-4.500v9z" fill="#bcbcbc"/></svg>
<svg class="ic" style="left:361px;top:57px" width="16" height="16" viewBox="0 0 16 15"><path d="M1.500 5l1.500-4h3l0.500 4zM14.500 5l-1.500-4h-3l-0.500 4z" fill="#333"/><rect x="0.500" y="5" width="6.500" height="9" rx="1" fill="#3a3a3a"/><rect x="9" y="5" width="6.500" height="9" rx="1" fill="#3a3a3a"/><rect x="6.500" y="5.500" width="3" height="4" fill="#555"/><rect x="1.500" y="11" width="4.500" height="2" fill="#888"/><rect x="10" y="11" width="4.500" height="2" fill="#888"/></svg>
<div class="sep" style="left:383px;top:57px;height:17px"></div>
<svg class="ic" style="left:391px;top:57px" width="16" height="16" viewBox="0 0 18 19"><path d="M1 0.800h8.500l3.500 3.500v9.700h-12z" fill="#f5fbff" stroke="#2a8fd0" stroke-width="1.300"/><path d="M9.500 0.800v3.500h3.500" fill="none" stroke="#2a8fd0"/><rect x="8.500" y="9.500" width="8.500" height="8.500" fill="#fff" stroke="#2a8fd0" stroke-width="1.300"/><path d="M10.500 13.500l2 2.500 3-5" fill="none" stroke="#1a6fb0" stroke-width="1.500"/></svg>
<svg class="ic" style="left:415px;top:60px" width="13" height="11" viewBox="0 0 13 11"><path d="M0 0.500h5.500M0 3h5.500M0 5.500h5.500M0 8h5.500M0 10.500h5.500M7.500 0.500h5.500M7.500 3h5.500M7.500 5.500h5.500M7.500 8h5.500M7.500 10.500h5.500" stroke="#222" stroke-width="1.100"/></svg>
<div class="sep" style="left:436px;top:57px;height:17px"></div>
<svg class="ic" style="left:441px;top:57px" width="15" height="15" viewBox="0 0 15 15"><rect x="1" y="1" width="13" height="13" fill="#fff" stroke="#111" stroke-width="2"/><path d="M7.500 2.500v10M2.500 7.500h10" stroke="#999" stroke-width="0.800" stroke-dasharray="1 1"/></svg>
<svg class="ic" style="left:458.5px;top:63px" width="6" height="5" viewBox="0 0 6 5"><path d="M0.500 0.500h6l-3 3.500z" fill="#222"/></svg>
<div class="sep" style="left:471px;top:57px;height:17px"></div>
<svg class="ic" style="left:477px;top:57px" width="16" height="16" viewBox="0 0 16 16"><g fill="#d4d4d4" stroke="#b4b4b4" stroke-width="0.800"><rect x="4.0" y="1.500" width="9" height="4.500"/><rect x="2.0" y="6" width="9" height="4.500"/><rect x="4.0" y="10.500" width="9" height="4.500"/></g></svg>
<svg class="ic" style="left:500px;top:57px" width="16" height="16" viewBox="0 0 16 16"><g fill="#d4d4d4" stroke="#b4b4b4" stroke-width="0.800"><rect x="6.5" y="1.500" width="9" height="4.500"/><rect x="4.5" y="6" width="9" height="4.500"/><rect x="6.5" y="10.500" width="9" height="4.500"/></g><path d="M0 11.500l3.500-3v6z" fill="#b8b8b8"/></svg>
<svg class="ic" style="left:523px;top:57px" width="16" height="16" viewBox="0 0 16 16"><g fill="#d4d4d4" stroke="#b4b4b4" stroke-width="0.800"><rect x="2.5" y="1.500" width="9" height="4.500"/><rect x="0.5" y="6" width="9" height="4.500"/><rect x="2.5" y="10.500" width="9" height="4.500"/></g><path d="M16 11.500l-3.500-3v6z" fill="#b8b8b8"/></svg>
<svg class="ic" style="left:546px;top:57px" width="16" height="16" viewBox="0 0 16 16"><g fill="#d4d4d4" stroke="#b4b4b4" stroke-width="0.800"><rect x="2.5" y="1.500" width="9" height="4.500"/><rect x="0.5" y="6" width="9" height="4.500"/><rect x="2.5" y="10.500" width="9" height="4.500"/></g><circle cx="13" cy="12.500" r="3" fill="#dcdcdc" stroke="#b0b0b0"/></svg>
<div class="sep" style="left:569px;top:57px;height:17px"></div>
<svg class="ic" style="left:575px;top:57px" width="16" height="16" viewBox="0 0 14 18"><path d="M1 0.800h8l4 4v12.400h-12z" fill="#f5fbff" stroke="#2a7fc8" stroke-width="1.300"/><path d="M9 0.800v4h4" fill="none" stroke="#2a7fc8"/><path d="M3.500 8h7M3.500 10.500h7M3.500 13h7" stroke="#2a7fc8" stroke-width="1.200"/></svg>
<svg class="ic" style="left:598px;top:57px" width="16" height="16" viewBox="0 0 18 18"><circle cx="7.500" cy="7.500" r="5.800" fill="#dedede" stroke="#a4a4a4" stroke-width="2.400"/><path d="M3.500 7.500c1-2 3-2 4 0s3 2 4 0" fill="none" stroke="#b0b0b0"/><path d="M12 12l4.500 4.500" stroke="#999" stroke-width="3.200"/></svg>
<div class="sep" style="left:621px;top:57px;height:17px"></div>
<svg class="ic" style="left:627px;top:57px" width="16" height="16" viewBox="0 0 17 16"><rect x="0.700" y="0.700" width="15.600" height="14.600" fill="#f4f4f4" stroke="#8c8c8c" stroke-width="1.200"/><rect x="3" y="3" width="3" height="3" fill="#2a7fc8"/><rect x="3" y="7" width="3" height="3" fill="#2a7fc8"/><rect x="3" y="11" width="3" height="2.500" fill="#2a7fc8"/><path d="M7.500 4.500h6M7.500 8.500h6M7.500 12h6" stroke="#555"/></svg>
<svg class="ic" style="left:649px;top:57px" width="16" height="16" viewBox="0 0 18 18"><path d="M1.500 16.500l9-9" stroke="#4a4ab0" stroke-width="2.400"/><path d="M13 0.500l1.300 3 3.200 0.500-2.300 2.200 0.600 3.300-2.800-1.600-2.800 1.600 0.600-3.300-2.300-2.200 3.200-0.500z" fill="#f8c83a" stroke="#d9a020" stroke-width="0.700"/></svg>
<div class="tx" id="ott" style="left:668.4px;top:57.72px;font-size:12px;line-height:15px;color:#111;">Ottimizza Immagini ...</div>
<div class="sep" style="left:793px;top:57px;height:17px"></div>
<div class="tx" id="a4" style="left:801.3px;top:57.72px;font-size:12px;line-height:15px;color:#111;">A4</div>
<svg class="ic" style="left:824px;top:63px" width="7" height="5" viewBox="0 0 7 5"><path d="M0.500 0.500h6l-3 3.500z" fill="#222"/></svg>
<div class="sep" style="left:836px;top:57px;height:17px"></div>
<div class="tx" id="mb" style="left:843.6px;top:57.72px;font-size:12px;line-height:15px;color:#111;font-weight:bold;">46,38Mb</div>
<div class="sep" style="left:897px;top:57px;height:17px"></div>
<div class="abs" style="left:0;top:79px;width:999px;height:26px;background:#fdfdfd"></div>
<div class="abs" style="left:1px;top:80px;width:774px;height:24px;background:#f8f8f8;border-radius:0 5px 5px 0"></div>
<div class="abs" style="left:1px;top:80px;width:156px;height:23px;background:#fff"></div>
<div class="abs" style="left:161px;top:80px;width:157px;height:23px;background:#fff"></div>
<div class="abs" style="left:142px;top:84px;width:15px;height:17px;background:#f0f0f0"></div>
<svg class="ic" style="left:146px;top:89px" width="8" height="5" viewBox="0 0 8 5"><path d="M0.300 0.500h7.400l-3.700 4z" fill="#9a9a9a"/></svg>
<div class="abs" style="left:303px;top:84px;width:15px;height:17px;background:#fafafa"></div>
<svg class="ic" style="left:307px;top:89px" width="8" height="5" viewBox="0 0 8 5"><path d="M0.300 0.500h7.400l-3.700 4z" fill="#9a9a9a"/></svg>
<div class="sep" style="left:325px;top:83px;height:19px"></div>
<div class="abs" style="left:332px;top:83px;width:59px;height:19px;background:#f4f4f4"></div>
<div class="abs" style="left:334px;top:84px;width:42px;height:17px;background:#eeeeee"></div>
<svg class="ic" style="left:381px;top:89px" width="8" height="5" viewBox="0 0 8 5"><path d="M0.300 0.500h7.400l-3.700 4z" fill="#9a9a9a"/></svg>
<div class="tx" style="left:401px;top:84px;font-family:'Liberation Serif',serif;font-weight:bold;font-size:14px;color:#a8a8a8">G</div>
<div class="tx" style="left:426px;top:84px;font-family:'Liberation Serif',serif;font-style:italic;font-size:14px;color:#a8a8a8">I</div>
<div class="tx" style="left:450px;top:84px;font-family:'Liberation Serif',serif;font-weight:bold;font-size:14px;color:#a8a8a8;text-decoration:underline">S</div>
<div class="sep" style="left:472px;top:83px;height:19px"></div>
<svg class="ic" style="left:481px;top:86px" width="11.5" height="13" viewBox="0 0 11.5 13"><path d="M0 1.0h11.5" stroke="#8a8a8a" stroke-width="1"/><path d="M0 3.5h8" stroke="#8a8a8a" stroke-width="1"/><path d="M0 6.0h11.5" stroke="#8a8a8a" stroke-width="1"/><path d="M0 8.5h8" stroke="#8a8a8a" stroke-width="1"/><path d="M0 11.0h11.5" stroke="#8a8a8a" stroke-width="1"/></svg>
<svg class="ic" style="left:506.5px;top:86px" width="11.5" height="13" viewBox="0 0 11.5 13"><path d="M0.0 1.0h11.5" stroke="#8a8a8a" stroke-width="1"/><path d="M2.75 3.5h6" stroke="#8a8a8a" stroke-width="1"/><path d="M0.0 6.0h11.5" stroke="#8a8a8a" stroke-width="1"/><path d="M2.75 8.5h6" stroke="#8a8a8a" stroke-width="1"/><path d="M0.0 11.0h11.5" stroke="#8a8a8a" stroke-width="1"/></svg>
<svg class="ic" style="left:531px;top:86px" width="11.5" height="13" viewBox="0 0 11.5 13"><path d="M0.0 1.0h11.5" stroke="#8a8a8a" stroke-width="1"/><path d="M3.5 3.5h8" stroke="#8a8a8a" stroke-width="1"/><path d="M0.0 6.0h11.5" stroke="#8a8a8a" stroke-width="1"/><path d="M3.5 8.5h8" stroke="#8a8a8a" stroke-width="1"/><path d="M0.0 11.0h11.5" stroke="#8a8a8a" stroke-width="1"/></svg>
<svg class="ic" style="left:554.5px;top:86px" width="12.5" height="13" viewBox="0 0 12.5 13"><path d="M0 1.0h12.5" stroke="#8a8a8a" stroke-width="1"/><path d="M0 3.5h12.5" stroke="#8a8a8a" stroke-width="1"/><path d="M0 6.0h12.5" stroke="#8a8a8a" stroke-width="1"/><path d="M0 8.5h12.5" stroke="#8a8a8a" stroke-width="1"/><path d="M0 11.0h12.5" stroke="#8a8a8a" stroke-width="1"/></svg>
<div class="sep" style="left:578px;top:83px;height:19px"></div>
<svg class="ic" style="left:587.5px;top:86px" width="15" height="13" viewBox="0 0 15 13"><rect x="0" y="0.500" width="2.500" height="2.500" fill="#999"/><rect x="0" y="5" width="2.500" height="2.500" fill="#999"/><rect x="0" y="9.500" width="2.500" height="2.500" fill="#999"/><path d="M5 1.800h9M5 6.300h9M5 10.800h9" stroke="#aaa"/></svg>
<svg class="ic" style="left:611px;top:85px" width="15" height="15" viewBox="0 0 15 15"><path d="M1 1.500v3M1 6.500h1.500v1.500h-1.500v1M1 11h1.500v3h-1.500" stroke="#999" fill="none" stroke-width="0.900"/><path d="M5 2.800h9M5 7.300h9M5 11.800h9" stroke="#aaa"/></svg>
<svg class="ic" style="left:634px;top:85px" width="16" height="15" viewBox="0 0 16 15"><path d="M0.500 1.500v3M3 1.500v3M0.500 6.500v3M3 6.500h1v3M0.500 11v3M3 11h1v3" stroke="#999" fill="none" stroke-width="0.900"/><path d="M6.500 2.800h8M6.500 7.300h8M6.500 11.800h8" stroke="#aaa"/></svg>
<div class="sep" style="left:659px;top:83px;height:19px"></div>
<div class="abs" style="left:667px;top:83px;width:54px;height:19px;background:#f4f4f4"></div>
<div class="abs" style="left:669px;top:84px;width:37px;height:17px;background:#eeeeee"></div>
<svg class="ic" style="left:710px;top:89px" width="8" height="5" viewBox="0 0 8 5"><path d="M0.300 0.500h7.400l-3.700 4z" fill="#9a9a9a"/></svg>
<div class="tx" style="left:730px;top:82px;font-size:16px;color:#909090;font-weight:bold">¶</div>
<svg class="ic" style="left:753px;top:85px" width="14" height="14" viewBox="0 0 14 14"><rect x="0.700" y="0.700" width="12.600" height="12.600" fill="#fff" stroke="#8a8a8a" stroke-width="1.200"/><path d="M5 3.500v6h4.500" fill="none" stroke="#8a8a8a" stroke-width="1.800"/></svg>
<div class="abs" style="left:0px;top:105px;width:999px;height:26px;background:#f0f0f0"></div>
<div class="abs" style="left:0px;top:107px;width:999px;height:18px;background:#f2f2f2;border-top:1px solid #fafafa;border-bottom:1px solid #fafafa"></div>
<svg class="ic" style="left:0;top:107px" width="999" height="18" font-family="Liberation Sans, sans-serif" font-size="8.600" fill="#505050"><text x="39.8" y="11">1</text><text x="77.6" y="11">2</text><text x="115.4" y="11">3</text><text x="153.2" y="11">4</text><text x="191.0" y="11">5</text><text x="228.8" y="11">6</text><text x="266.6" y="11">7</text><text x="304.4" y="11">8</text><text x="342.2" y="11">9</text><text x="380.0" y="11">10</text><text x="417.7" y="11">11</text><text x="455.5" y="11">12</text><text x="493.3" y="11">13</text><text x="531.1" y="11">14</text><text x="568.9" y="11">15</text><text x="606.7" y="11">16</text><text x="644.5" y="11">17</text><text x="682.3" y="11">18</text><text x="720.1" y="11">19</text><text x="757.9" y="11">20</text><text x="795.7" y="11">21</text><text x="833.5" y="11">22</text><text x="871.3" y="11">23</text><text x="909.1" y="11">24</text><text x="946.9" y="11">25</text><text x="984.7" y="11">26</text><path d="M0.5 6v9M4.3 13.500v1.500M8.1 13.500v1.500M11.8 13.500v1.500M15.6 13.500v1.500M19.4 11v4M23.2 13.500v1.500M27.0 13.500v1.500M30.7 13.500v1.500M34.5 13.500v1.500M38.3 6v9M42.1 13.500v1.500M45.9 13.500v1.500M49.6 13.500v1.500M53.4 13.500v1.500M57.2 11v4M61.0 13.500v1.500M64.8 13.500v1.500M68.5 13.500v1.500M72.3 13.500v1.500M76.1 6v9M79.9 13.500v1.500M83.6 13.500v1.500M87.4 13.500v1.500M91.2 13.500v1.500M95.0 11v4M98.8 13.500v1.500M102.5 13.500v1.500M106.3 13.500v1.500M110.1 13.500v1.500M113.9 6v9M117.7 13.500v1.500M121.4 13.500v1.500M125.2 13.500v1.500M129.0 13.500v1.500M132.8 11v4M136.6 13.500v1.500M140.3 13.500v1.500M144.1 13.500v1.500M147.9 13.500v1.500M151.7 6v9M155.5 13.500v1.500M159.2 13.500v1.500M163.0 13.500v1.500M166.8 13.500v1.500M170.6 11v4M174.4 13.500v1.500M178.1 13.500v1.500M181.9 13.500v1.500M185.7 13.500v1.500M189.5 6v9M193.3 13.500v1.500M197.0 13.500v1.500M200.8 13.500v1.500M204.6 13.500v1.500M208.4 11v4M212.2 13.500v1.500M215.9 13.500v1.500M219.7 13.500v1.500M223.5 13.500v1.500M227.3 6v9M231.0 13.500v1.500M234.8 13.500v1.500M238.6 13.500v1.500M242.4 13.500v1.500M246.2 11v4M249.9 13.500v1.500M253.7 13.500v1.500M257.5 13.500v1.500M261.3 13.500v1.500M265.1 6v9M268.8 13.500v1.500M272.6 13.500v1.500M276.4 13.500v1.500M280.2 13.500v1.500M284.0 11v4M287.7 13.500v1.500M291.5 13.500v1.500M295.3 13.500v1.500M299.1 13.500v1.500M302.9 6v9M306.6 13.500v1.500M310.4 13.500v1.500M314.2 13.500v1.500M318.0 13.500v1.500M321.8 11v4M325.5 13.500v1.500M329.3 13.500v1.500M333.1 13.500v1.500M336.9 13.500v1.500M340.7 6v9M344.4 13.500v1.500M348.2 13.500v1.500M352.0 13.500v1.500M355.8 13.500v1.500M359.6 11v4M363.3 13.500v1.500M367.1 13.500v1.500M370.9 13.500v1.500M374.7 13.500v1.500M378.5 6v9M382.2 13.500v1.500M386.0 13.500v1.500M389.8 13.500v1.500M393.6 13.500v1.500M397.3 11v4M401.1 13.500v1.500M404.9 13.500v1.500M408.7 13.500v1.500M412.5 13.500v1.500M416.2 6v9M420.0 13.500v1.500M423.8 13.500v1.500M427.6 13.500v1.500M431.4 13.500v1.500M435.1 11v4M438.9 13.500v1.500M442.7 13.500v1.500M446.5 13.500v1.500M450.3 13.500v1.500M454.0 6v9M457.8 13.500v1.500M461.6 13.500v1.500M465.4 13.500v1.500M469.2 13.500v1.500M472.9 11v4M476.7 13.500v1.500M480.5 13.500v1.500M484.3 13.500v1.500M488.1 13.500v1.500M491.8 6v9M495.6 13.500v1.500M499.4 13.500v1.500M503.2 13.500v1.500M507.0 13.500v1.500M510.7 11v4M514.5 13.500v1.500M518.3 13.500v1.500M522.1 13.500v1.500M525.9 13.500v1.500M529.6 6v9M533.4 13.500v1.500M537.2 13.500v1.500M541.0 13.500v1.500M544.7 13.500v1.500M548.5 11v4M552.3 13.500v1.500M556.1 13.500v1.500M559.9 13.500v1.500M563.6 13.500v1.500M567.4 6v9M571.2 13.500v1.500M575.0 13.500v1.500M578.8 13.500v1.500M582.5 13.500v1.500M586.3 11v4M590.1 13.500v1.500M593.9 13.500v1.500M597.7 13.500v1.500M601.4 13.500v1.500M605.2 6v9M609.0 13.500v1.500M612.8 13.500v1.500M616.6 13.500v1.500M620.3 13.500v1.500M624.1 11v4M627.9 13.500v1.500M631.7 13.500v1.500M635.5 13.500v1.500M639.2 13.500v1.500M643.0 6v9M646.8 13.500v1.500M650.6 13.500v1.500M654.4 13.500v1.500M658.1 13.500v1.500M661.9 11v4M665.7 13.500v1.500M669.5 13.500v1.500M673.3 13.500v1.500M677.0 13.500v1.500M680.8 6v9M684.6 13.500v1.500M688.4 13.500v1.500M692.1 13.500v1.500M695.9 13.500v1.500M699.7 11v4M703.5 13.500v1.500M707.3 13.500v1.500M711.0 13.500v1.500M714.8 13.500v1.500M718.6 6v9M722.4 13.500v1.500M726.2 13.500v1.500M729.9 13.500v1.500M733.7 13.500v1.500M737.5 11v4M741.3 13.500v1.500M745.1 13.500v1.500M748.8 13.500v1.500M752.6 13.500v1.500M756.4 6v9M760.2 13.500v1.500M764.0 13.500v1.500M767.7 13.500v1.500M771.5 13.500v1.500M775.3 11v4M779.1 13.500v1.500M782.9 13.500v1.500M786.6 13.500v1.500M790.4 13.500v1.500M794.2 6v9M798.0 13.500v1.500M801.8 13.500v1.500M805.5 13.500v1.500M809.3 13.500v1.500M813.1 11v4M816.9 13.500v1.500M820.7 13.500v1.500M824.4 13.500v1.500M828.2 13.500v1.500M832.0 6v9M835.8 13.500v1.500M839.5 13.500v1.500M843.3 13.500v1.500M847.1 13.500v1.500M850.9 11v4M854.7 13.500v1.500M858.4 13.500v1.500M862.2 13.500v1.500M866.0 13.500v1.500M869.8 6v9M873.6 13.500v1.500M877.3 13.500v1.500M881.1 13.500v1.500M884.9 13.500v1.500M888.7 11v4M892.5 13.500v1.500M896.2 13.500v1.500M900.0 13.500v1.500M903.8 13.500v1.500M907.6 6v9M911.4 13.500v1.500M915.1 13.500v1.500M918.9 13.500v1.500M922.7 13.500v1.500M926.5 11v4M930.3 13.500v1.500M934.0 13.500v1.500M937.8 13.500v1.500M941.6 13.500v1.500M945.4 6v9M949.2 13.500v1.500M952.9 13.500v1.500M956.7 13.500v1.500M960.5 13.500v1.500M964.3 11v4M968.1 13.500v1.500M971.8 13.500v1.500M975.6 13.500v1.500M979.4 13.500v1.500M983.2 6v9M986.9 13.500v1.500M990.7 13.500v1.500M994.5 13.500v1.500" stroke="#444" stroke-width="1" fill="none"/></svg>
<div class="abs" style="left:0px;top:131px;width:25px;height:880px;background:#f0f0f0"></div>
<div class="abs" style="left:3px;top:131px;width:20px;height:880px;background:#f4f4f4;border-left:1px solid #fafafa;border-right:1px solid #fafafa"></div>
<svg class="ic" style="left:3px;top:131px" width="20" height="880" font-family="Liberation Sans, sans-serif" font-size="9" fill="#3c3c3c"><text transform="translate(9.500,39.9) rotate(-90)" text-anchor="end">1</text><text transform="translate(9.500,77.7) rotate(-90)" text-anchor="end">2</text><text transform="translate(9.500,115.4) rotate(-90)" text-anchor="end">3</text><text transform="translate(9.500,153.2) rotate(-90)" text-anchor="end">4</text><text transform="translate(9.500,190.9) rotate(-90)" text-anchor="end">5</text><text transform="translate(9.500,228.7) rotate(-90)" text-anchor="end">6</text><text transform="translate(9.500,266.5) rotate(-90)" text-anchor="end">7</text><text transform="translate(9.500,304.2) rotate(-90)" text-anchor="end">8</text><text transform="translate(9.500,342.0) rotate(-90)" text-anchor="end">9</text><text transform="translate(9.500,379.7) rotate(-90)" text-anchor="end">10</text><text transform="translate(9.500,417.5) rotate(-90)" text-anchor="end">11</text><text transform="translate(9.500,455.2) rotate(-90)" text-anchor="end">12</text><text transform="translate(9.500,493.0) rotate(-90)" text-anchor="end">13</text><text transform="translate(9.500,530.7) rotate(-90)" text-anchor="end">14</text><text transform="translate(9.500,568.5) rotate(-90)" text-anchor="end">15</text><text transform="translate(9.500,606.2) rotate(-90)" text-anchor="end">16</text><text transform="translate(9.500,644.0) rotate(-90)" text-anchor="end">17</text><text transform="translate(9.500,681.7) rotate(-90)" text-anchor="end">18</text><text transform="translate(9.500,719.5) rotate(-90)" text-anchor="end">19</text><text transform="translate(9.500,757.2) rotate(-90)" text-anchor="end">20</text><text transform="translate(9.500,795.0) rotate(-90)" text-anchor="end">21</text><text transform="translate(9.500,832.7) rotate(-90)" text-anchor="end">22</text><text transform="translate(9.500,870.5) rotate(-90)" text-anchor="end">23</text><path d="M5.500 0.7h8M12 4.5h1.500M12 8.2h1.500M12 12.0h1.500M12 15.8h1.500M10 19.6h3.500M12 23.3h1.500M12 27.1h1.500M12 30.9h1.500M12 34.7h1.500M5.500 38.4h8M12 42.2h1.500M12 46.0h1.500M12 49.8h1.500M12 53.6h1.500M10 57.3h3.500M12 61.1h1.500M12 64.9h1.500M12 68.6h1.500M12 72.4h1.500M5.500 76.2h8M12 80.0h1.500M12 83.8h1.500M12 87.5h1.500M12 91.3h1.500M10 95.1h3.500M12 98.9h1.500M12 102.6h1.500M12 106.4h1.500M12 110.2h1.500M5.500 113.9h8M12 117.7h1.500M12 121.5h1.500M12 125.3h1.500M12 129.0h1.500M10 132.8h3.500M12 136.6h1.500M12 140.4h1.500M12 144.1h1.500M12 147.9h1.500M5.500 151.7h8M12 155.5h1.500M12 159.2h1.500M12 163.0h1.500M12 166.8h1.500M10 170.6h3.500M12 174.4h1.500M12 178.1h1.500M12 181.9h1.500M12 185.7h1.500M5.500 189.4h8M12 193.2h1.500M12 197.0h1.500M12 200.8h1.500M12 204.5h1.500M10 208.3h3.500M12 212.1h1.500M12 215.9h1.500M12 219.6h1.500M12 223.4h1.500M5.500 227.2h8M12 231.0h1.500M12 234.8h1.500M12 238.5h1.500M12 242.3h1.500M10 246.1h3.500M12 249.9h1.500M12 253.6h1.500M12 257.4h1.500M12 261.2h1.500M5.500 265.0h8M12 268.7h1.500M12 272.5h1.500M12 276.3h1.500M12 280.0h1.500M10 283.8h3.500M12 287.6h1.500M12 291.4h1.500M12 295.1h1.500M12 298.9h1.500M5.500 302.7h8M12 306.5h1.500M12 310.2h1.500M12 314.0h1.500M12 317.8h1.500M10 321.6h3.500M12 325.3h1.500M12 329.1h1.500M12 332.9h1.500M12 336.7h1.500M5.500 340.5h8M12 344.2h1.500M12 348.0h1.500M12 351.8h1.500M12 355.5h1.500M10 359.3h3.500M12 363.1h1.500M12 366.9h1.500M12 370.6h1.500M12 374.4h1.500M5.500 378.2h8M12 382.0h1.500M12 385.8h1.500M12 389.5h1.500M12 393.3h1.500M10 397.1h3.500M12 400.8h1.500M12 404.6h1.500M12 408.4h1.500M12 412.2h1.500M5.500 416.0h8M12 419.7h1.500M12 423.5h1.500M12 427.3h1.500M12 431.0h1.500M10 434.8h3.500M12 438.6h1.500M12 442.4h1.500M12 446.1h1.500M12 449.9h1.500M5.500 453.7h8M12 457.5h1.500M12 461.2h1.500M12 465.0h1.500M12 468.8h1.500M10 472.6h3.500M12 476.3h1.500M12 480.1h1.500M12 483.9h1.500M12 487.7h1.500M5.500 491.5h8M12 495.2h1.500M12 499.0h1.500M12 502.8h1.500M12 506.5h1.500M10 510.3h3.500M12 514.1h1.500M12 517.9h1.500M12 521.7h1.500M12 525.4h1.500M5.500 529.2h8M12 533.0h1.500M12 536.8h1.500M12 540.5h1.500M12 544.3h1.500M10 548.1h3.500M12 551.8h1.500M12 555.6h1.500M12 559.4h1.500M12 563.2h1.500M5.500 567.0h8M12 570.7h1.500M12 574.5h1.500M12 578.3h1.500M12 582.0h1.500M10 585.8h3.500M12 589.6h1.500M12 593.4h1.500M12 597.2h1.500M12 600.9h1.500M5.500 604.7h8M12 608.5h1.500M12 612.2h1.500M12 616.0h1.500M12 619.8h1.500M10 623.6h3.500M12 627.3h1.500M12 631.1h1.500M12 634.9h1.500M12 638.7h1.500M5.500 642.5h8M12 646.2h1.500M12 650.0h1.500M12 653.8h1.500M12 657.5h1.500M10 661.3h3.500M12 665.1h1.500M12 668.9h1.500M12 672.7h1.500M12 676.4h1.500M5.500 680.2h8M12 684.0h1.500M12 687.8h1.500M12 691.5h1.500M12 695.3h1.500M10 699.1h3.500M12 702.8h1.500M12 706.6h1.500M12 710.4h1.500M12 714.2h1.500M5.500 718.0h8M12 721.7h1.500M12 725.5h1.500M12 729.3h1.500M12 733.0h1.500M10 736.8h3.500M12 740.6h1.500M12 744.4h1.500M12 748.2h1.500M12 751.9h1.500M5.500 755.7h8M12 759.5h1.500M12 763.2h1.500M12 767.0h1.500M12 770.8h1.500M10 774.6h3.500M12 778.3h1.500M12 782.1h1.500M12 785.9h1.500M12 789.7h1.500M5.500 793.5h8M12 797.2h1.500M12 801.0h1.500M12 804.8h1.500M12 808.5h1.500M10 812.3h3.500M12 816.1h1.500M12 819.9h1.500M12 823.7h1.500M12 827.4h1.500M5.500 831.2h8M12 835.0h1.500M12 838.8h1.500M12 842.5h1.500M12 846.3h1.500M10 850.1h3.500M12 853.8h1.500M12 857.6h1.500M12 861.4h1.500M12 865.2h1.500M5.500 869.0h8M12 872.7h1.500M12 876.5h1.500" stroke="#444" stroke-width="1" fill="none"/></svg>
<div id="doc" style="left:25px;top:131px;width:954px;height:879.500px">
<div id="page" style="left:80px;top:38px;width:796px;height:900px">
<div class="abs" style="left:21px;top:40px;width:753px;height:900px;border:2px solid #000"></div>
<div class="abs" style="left:21px;top:318px;width:753px;height:2px;background:#000"></div>
<div class="abs" style="left:21px;top:460px;width:753px;height:2px;background:#000"></div>
<div class="abs" style="left:28px;top:169px;width:740px;height:147.5px;background:#e4e5f8"></div>
<div class="abs" style="left:28px;top:471px;width:370px;height:400px;background:#e4e5f8"></div>
<div class="tx" id="d1" style="left:386.7px;transform:translateX(-50%);top:82.67px;font-size:26px;line-height:32px;color:#06064e;">Comune di</div>
<div class="tx" id="d2" style="left:384.9px;transform:translateX(-50%);top:115.76px;font-size:14.5px;line-height:18px;color:#5a9cbd;">Provincia di</div>
<div class="tx" id="d3" style="left:396.45px;transform:translateX(-50%);top:184.35px;font-size:25px;line-height:31px;color:#06064e;">Pi.M.U.S.</div>
<div class="tx" id="d4" style="left:398.0px;transform:translateX(-50%);top:218.55px;font-size:25px;line-height:31px;color:#06064e;">PIANO DI MONTAGGIO, USO E SMONTAGGIO DI UN</div>
<div class="tx" id="d5" style="left:397.65px;transform:translateX(-50%);top:251.85px;font-size:25px;line-height:31px;color:#06064e;">PONTEGGIO METALLICO A TELAI PREFABBRICATI</div>
<div class="tx" id="d6" style="left:397.75px;transform:translateX(-50%);top:285.24px;font-size:13.5px;line-height:17px;color:#2d9fd2;font-weight:bold;">(D.Lgs. 9 aprile 2008 n° 81 e s.m.i)</div>
<div class="tx" id="d7" style="left:34.6px;top:358.02px;font-size:17.5px;line-height:22px;color:#000;font-weight:bold;">LAVORI</div>
<div class="tx" id="d8" style="left:396.85px;transform:translateX(-50%);top:387.56px;font-size:14.5px;line-height:18px;color:#5a9cbd;">Nuovo oggeto lavori</div>
<div class="tx" id="d9" style="left:287.9px;top:530.67px;font-size:15px;line-height:19px;color:#06064e;font-weight:bold;">COMMITTENTE</div>
<div class="tx" id="d10" style="left:323px;top:574.97px;font-size:15px;line-height:19px;color:#06064e;font-weight:bold;">CANTIERE</div>
<div class="tx" id="d11" style="left:306.6px;top:621.07px;font-size:15px;line-height:19px;color:#06064e;font-weight:bold;">UBICAZIONE</div>
<div class="tx" id="d12" style="left:400.4px;top:576.26px;font-size:14.5px;line-height:18px;color:#111;">Nuovo cantiere</div>
<div class="tx" id="d13" style="left:402px;top:622.76px;font-size:14.5px;line-height:18px;color:#111;">,</div>
<div class="tx" id="d14" style="left:515.1px;top:706.86px;font-size:14.5px;line-height:18px;color:#111;">IL REDATTORE Pi.M.U.S.</div>
<div class="abs" style="left:506px;top:796.5px;width:191px;height:1px;background:#222"></div>
</div>
</div>
<div class="abs" style="left:979px;top:131px;width:20px;height:880px;background:#f0f0f0"></div>
<div class="abs" style="left:987px;top:149px;width:2px;height:17px;background:#8a8a8a"></div>
<div class="abs" style="left:0px;top:1010px;width:999px;height:24px;background:linear-gradient(#fbfbfb,#f3f3f3 40%,#e9e9e9);border-top:1px solid #fdfdfd"></div>
<div class="tx" id="sb1" style="left:20px;top:1014.7px;font-size:11px;line-height:14px;color:#111;">Sezione 1/1</div>
<div class="tx" id="sb2" style="left:108px;top:1014.7px;font-size:11px;line-height:14px;color:#111;">Pagina 1/1</div>
<div class="tx" id="sb3" style="left:185px;top:1014.7px;font-size:11px;line-height:14px;color:#111;">Linea 1</div>
<div class="tx" id="sb4" style="left:250px;top:1014.7px;font-size:11px;line-height:14px;color:#111;">Colonna 0</div>
<div class="tx" id="sb5" style="left:410px;top:1014.7px;font-size:11px;line-height:14px;color:#111;">NUM</div>
<div class="tx" id="sb6" style="left:953.5px;top:1014.7px;font-size:11px;line-height:14px;color:#111;">100%</div>
<div class="sbs" style="left:93px;top:1012px"></div>
<div class="sbs" style="left:176px;top:1012px"></div>
<div class="sbs" style="left:241px;top:1012px"></div>
<div class="sbs" style="left:319px;top:1012px"></div>
<div class="sbs" style="left:367px;top:1012px"></div>
<div class="sbs" style="left:401.5px;top:1012px"></div>
<div class="sbs" style="left:444px;top:1012px"></div>
<svg class="ic" style="left:769px;top:1013px" width="36" height="18" viewBox="0 0 36 18"><rect x="4.500" y="5.500" width="7" height="6" fill="#fff" stroke="#222" stroke-width="1.200"/><path d="M6 7.500h4M6 9.500h4" stroke="#222" stroke-width="0.800"/><path d="M8 0.500l2.500 3h-5zM8 16.500l2.500-3h-5zM0.500 8.500l3-2.500v5zM15.500 8.500l-3-2.500v5z" fill="#222"/><rect x="22.500" y="3.500" width="7" height="10" fill="#fff" stroke="#222" stroke-width="1.200"/><path d="M24 6h4M24 8h4M24 10h4M24 12h4" stroke="#222" stroke-width="0.800"/><path d="M18.500 8.500l3-2.500v5zM33.500 8.500l-3-2.500v5z" fill="#222"/></svg>
<div class="abs" style="left:810px;top:1021px;width:8px;height:2px;background:#222"></div>
<div class="abs" style="left:829px;top:1021.5px;width:91px;height:1px;background:#333"></div>
<div class="abs" style="left:872px;top:1018px;width:4px;height:9px;background:#111"></div>
<div class="abs" style="left:930px;top:1021px;width:9px;height:2px;background:#222"></div>
<div class="abs" style="left:933.5px;top:1017.5px;width:2px;height:9px;background:#222"></div>
</div>
</div></body></html>
